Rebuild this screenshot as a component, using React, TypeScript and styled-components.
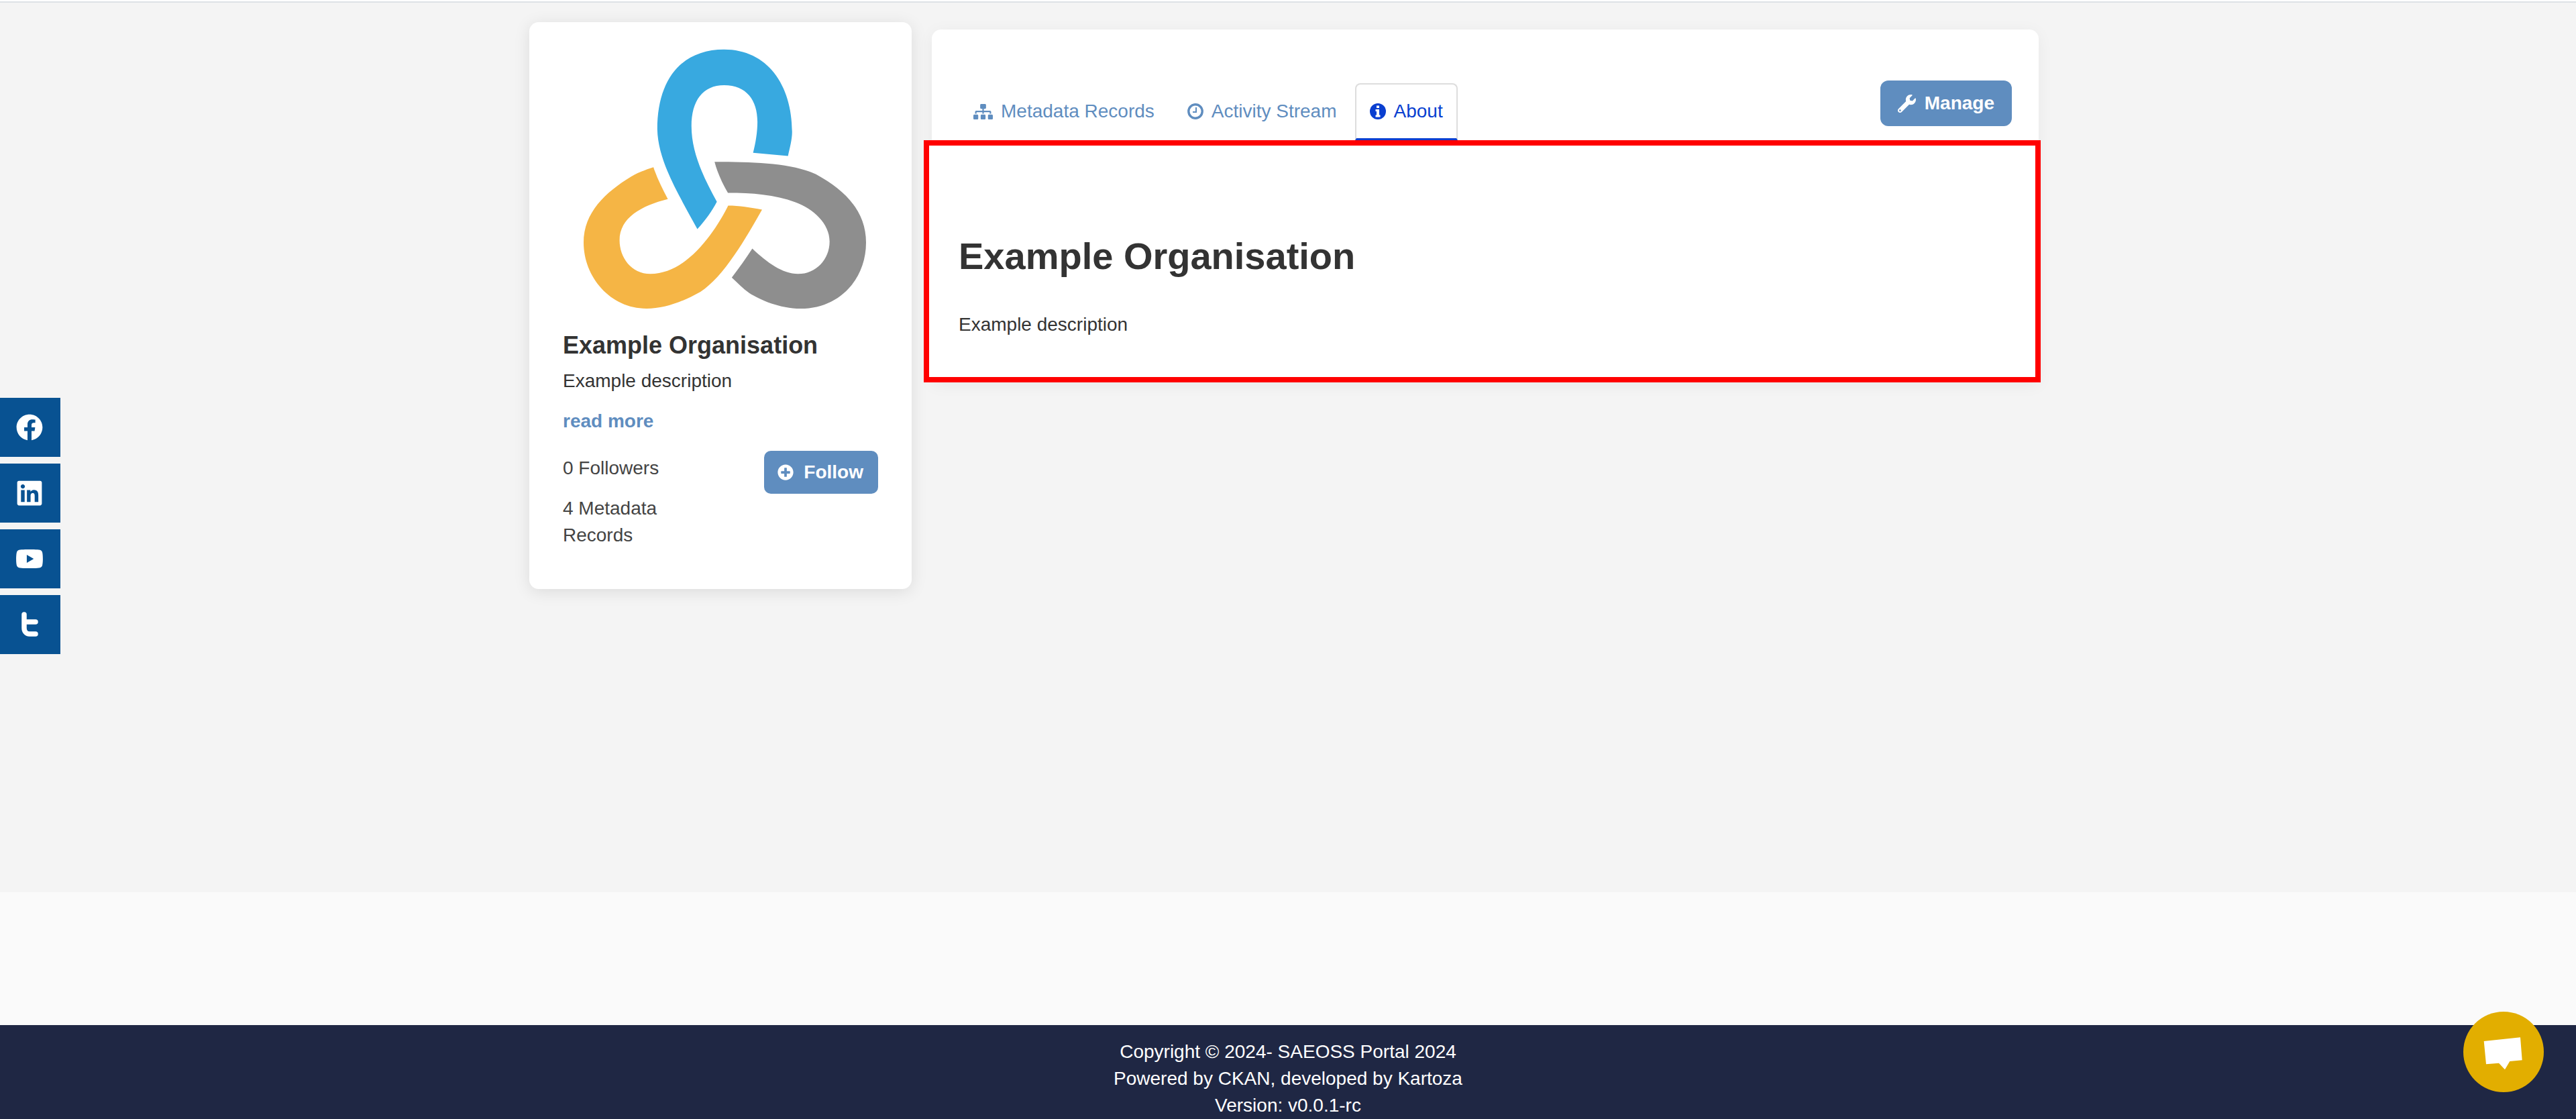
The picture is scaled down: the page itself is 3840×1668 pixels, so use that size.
import React from 'react';
import styled, {createGlobalStyle} from 'styled-components';
import {
    FaFacebook,
    FaLinkedin,
    FaPlusCircle,
    FaSitemap,
    FaWrench,
    FaYoutube,
} from 'react-icons/fa';

const GlobalStyle = createGlobalStyle`
  html, body {
    margin: 0;
    padding: 0;
    overflow: hidden;
    background: #f4f4f4;
  }
  * {
    box-sizing: border-box;
  }
  body {
    font-family: "Liberation Sans", Arial, sans-serif;
    font-size: 28px;
    line-height: 40px;
    color: #333;
  }
`;

// logo is traced from the reference, so the viewBox is not square on purpose
const Logo = () => (
    <LogoSvg viewBox="235 220 1100 1160" preserveAspectRatio="none">
        <path
            fill="#38a9e0"
            d="M678 1025C600 860 525 720 522 580C522 350 620 222 782 222C950 222 1047 380 1047 590C1047 625 1038 660 1031 698L895 684C905 640 912 590 912 545C912 450 870 382 782 382C700 382 655 450 655 565C655 680 700 790 754 903C735 945 708 988 678 1025Z"
        />
        <path
            fill="#8e8e8e"
            d="M745 724C900 724 1050 730 1140 780C1260 855 1335 950 1335 1085C1335 1250 1230 1380 1080 1380C1000 1380 920 1340 880 1310C855 1290 835 1265 812 1241C840 1200 868 1155 892 1112C950 1175 1010 1225 1070 1225C1140 1225 1193 1160 1193 1080C1193 1000 1130 935 1060 905C980 870 890 863 797 863C775 820 755 770 745 724Z"
        />
        <path
            fill="#f5b545"
            d="M507 748C520 795 542 845 563 891C460 920 375 975 375 1075C375 1150 420 1225 495 1225C640 1225 750 1030 798 920C840 920 885 928 930 938C870 1060 780 1240 690 1305C620 1350 550 1380 480 1380C340 1380 235 1240 235 1085C235 950 320 860 420 790C450 770 480 758 507 748Z"
        />
    </LogoSvg>
);

// old font-awesome clock, the hands point up and left
const ClockIcon = () => (
    <svg width="24" height="24" viewBox="0 0 24 24">
        <circle cx="12" cy="12" r="10.2" fill="none" stroke="currentColor" strokeWidth="3.4"/>
        <path d="M13 6V13H8" fill="none" stroke="currentColor" strokeWidth="2"/>
    </svg>
);

const InfoIcon = () => (
    <svg width="24" height="24" viewBox="0 0 24 24">
        <circle cx="12" cy="12" r="12" fill="currentColor"/>
        <path fill="#fff" d="M10 3.5H14V7H10ZM8.5 9H14V17.5H15.5V20.5H8.5V17.5H10V12H8.5Z"/>
    </svg>
);

const OldTwitter = () => (
    <svg width="26" height="38" viewBox="0 0 26 38">
        <path
            d="M5 4V24C5 29 8 33 13 33H22M5 15H22"
            fill="none"
            stroke="#fff"
            strokeWidth="7.5"
            strokeLinecap="round"
            strokeLinejoin="round"
        />
    </svg>
);

const ChatBubble = () => (
    <svg width="120" height="120" viewBox="0 0 120 120">
        <polygon fill="#fff" points="30.7,44 85,38.3 87.7,72.3 69.3,74 62,86.3 53,76.7 34,78.3"/>
    </svg>
);

const App = () => {
    return (
        <>
            <GlobalStyle/>
            <TopBar/>
            <Main>
                <Sidebar>
                    <Logo/>
                    <OrgName>Example Organisation</OrgName>
                    <OrgDescription>Example description</OrgDescription>
                    <ReadMore href="#">read more</ReadMore>
                    <StatsRow>
                        <Stats>
                            <Stat>0 Followers</Stat>
                            <Stat>4 Metadata Records</Stat>
                        </Stats>
                        <FollowButton>
                            <FaPlusCircle size={24}/>
                            Follow
                        </FollowButton>
                    </StatsRow>
                </Sidebar>
                <Content>
                    <ContentHeader>
                        <Tabs>
                            <Tab>
                                <FaSitemap size={29}/>
                                Metadata Records
                            </Tab>
                            <Tab>
                                <ClockIcon/>
                                Activity Stream
                            </Tab>
                            <Tab $active>
                                <InfoIcon/>
                                About
                            </Tab>
                        </Tabs>
                        <ManageButton>
                            <FaWrench size={27}/>
                            Manage
                        </ManageButton>
                    </ContentHeader>
                    <AboutPanel>
                        <Heading>Example Organisation</Heading>
                        <Description>Example description</Description>
                    </AboutPanel>
                </Content>
            </Main>
            <PaleStrip/>
            <Footer>
                <div>Copyright © 2024- SAEOSS Portal 2024</div>
                <div>Powered by CKAN, developed by Kartoza</div>
                <div>Version: v0.0.1-rc</div>
            </Footer>
            <SocialRail>
                <SocialLink href="#"><FaFacebook size={40}/></SocialLink>
                <SocialLink href="#"><FaLinkedin size={42}/></SocialLink>
                <SocialLink href="#"><FaYoutube size={42}/></SocialLink>
                <SocialLink href="#"><OldTwitter/></SocialLink>
            </SocialRail>
            <ChatButton>
                <ChatBubble/>
            </ChatButton>
        </>
    );
};

const TopBar = styled.div`
  height: 4px;
  background: #fff;
  border-bottom: 2px solid #dee2e6;
`;

const Main = styled.main`
  display: flex;
  align-items: flex-start;
  gap: 30px;
  height: 1326px;
  padding: 29px 0 0 789px;
  background: #f4f4f4;
`;

const Sidebar = styled.aside`
  display: flex;
  flex-direction: column;
  width: 570px;
  height: 845px;
  padding: 40px 50px 0 50px;
  background: #fff;
  border-radius: 14px;
  box-shadow: 0 4px 24px rgba(0, 0, 0, 0.1);
`;

const LogoSvg = styled.svg`
  display: block;
  flex: none;
  width: 421px;
  height: 387px;
  margin-left: 31px;
`;

const OrgName = styled.h2`
  margin: 33px 0 0;
  font-size: 36px;
  line-height: 44px;
  font-weight: 700;
  color: #333;
`;

const OrgDescription = styled.p`
  margin: 11px 0 0;
`;

const ReadMore = styled.a`
  margin-top: 20px;
  font-weight: 700;
  color: #5f8dbf;
  text-decoration: none;
`;

const StatsRow = styled.div`
  display: flex;
  justify-content: space-between;
  align-items: flex-start;
  margin-top: 24px;
`;

const Stats = styled.div`
  display: flex;
  flex-direction: column;
  gap: 20px;
  width: 200px;
  padding-top: 6px;
`;

const Stat = styled.div`
  color: #444;
`;

const FollowButton = styled.button`
  display: flex;
  align-items: center;
  gap: 15px;
  height: 64px;
  padding: 0 22px 0 20px;
  border: 0;
  border-radius: 10px;
  background: #5f8dbf;
  color: #fff;
  font: 700 28px/40px "Liberation Sans", Arial, sans-serif;
`;

const Content = styled.section`
  width: 1650px;
  margin-top: 11px;
  background: #fff;
  border-radius: 14px 14px 0 0;
  box-shadow: 0 4px 24px rgba(0, 0, 0, 0.05);
`;

const ContentHeader = styled.div`
  display: flex;
  justify-content: space-between;
  align-items: flex-start;
  height: 165px;
  padding: 76px 40px 0 40px;
`;

const Tabs = styled.nav`
  display: flex;
  align-items: stretch;
  gap: 5px;
  height: 89px;
  margin-top: 4px;
`;

const Tab = styled.a<{ $active?: boolean }>`
  display: flex;
  align-items: center;
  gap: 12px;
  height: 85px;
  padding: 0 20px;
  border: 2px solid ${props => (props.$active ? '#ddd' : 'transparent')};
  border-bottom: 3px solid ${props => (props.$active ? '#0a3fd0' : 'transparent')};
  border-radius: 8px 8px 0 0;
  color: ${props => (props.$active ? '#0a3fd0' : '#5f8dbf')};
  white-space: nowrap;
`;

const ManageButton = styled.button`
  display: flex;
  align-items: center;
  gap: 13px;
  height: 68px;
  padding: 0 26px;
  border: 0;
  border-radius: 12px;
  background: #5f8dbf;
  color: #fff;
  font: 700 28px/40px "Liberation Sans", Arial, sans-serif;
`;

// the red frame sticks out of the white card a little, as it does in the picture
const AboutPanel = styled.div`
  margin: 0 -3px 0 -12px;
  padding: 131px 45px 58px 44px;
  border: 8px solid #f00;
  background: #fff;
`;

const Heading = styled.h1`
  margin: 0;
  font-size: 56px;
  line-height: 68px;
  font-weight: 700;
  color: #333;
`;

const Description = styled.p`
  margin: 48px 0 0;
`;

const PaleStrip = styled.div`
  height: 198px;
  background: #fafafa;
`;

const Footer = styled.footer`
  height: 140px;
  padding-top: 20px;
  background: #1f2744;
  color: #fff;
  text-align: center;
`;

const SocialRail = styled.div`
  position: fixed;
  top: 593px;
  left: 0;
  display: flex;
  flex-direction: column;
  gap: 10px;
`;

const SocialLink = styled.a`
  display: flex;
  align-items: center;
  justify-content: center;
  width: 90px;
  height: 88px;
  padding-right: 2px;
  background: #085292;
  color: #fff;
`;

const ChatButton = styled.div`
  position: fixed;
  top: 1508px;
  left: 3672px;
  width: 120px;
  height: 120px;
  border-radius: 50%;
  background: #e2ae00;
  svg {
    display: block;
  }
`;

export default App;
